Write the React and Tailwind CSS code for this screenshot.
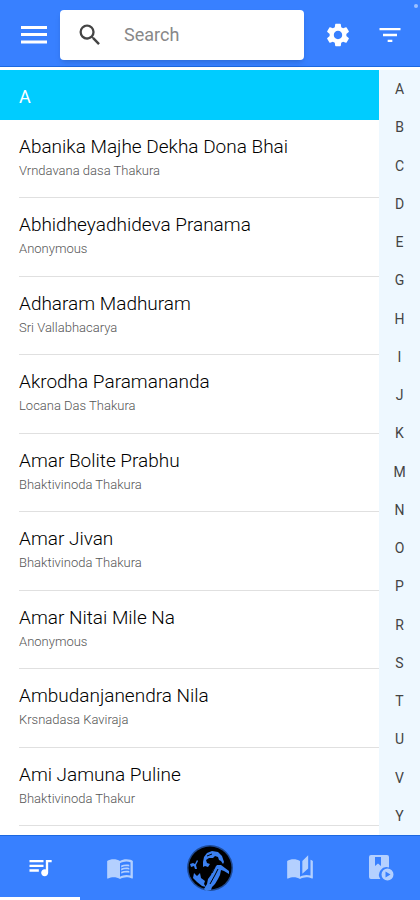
import { useState } from "react";
import { MdSettings, MdFilterList, MdSearch, MdQueueMusic, MdMenuBook, MdAutoStories } from "react-icons/md";

const songs = [
  { title: "Abanika Majhe Dekha Dona Bhai", author: "Vrndavana dasa Thakura" },
  { title: "Abhidheyadhideva Pranama", author: "Anonymous" },
  { title: "Adharam Madhuram", author: "Sri Vallabhacarya" },
  { title: "Akrodha Paramananda", author: "Locana Das Thakura" },
  { title: "Amar Bolite Prabhu", author: "Bhaktivinoda Thakura" },
  { title: "Amar Jivan", author: "Bhaktivinoda Thakura" },
  { title: "Amar Nitai Mile Na", author: "Anonymous" },
  { title: "Ambudanjanendra Nila", author: "Krsnadasa Kaviraja" },
  { title: "Ami Jamuna Puline", author: "Bhaktivinoda Thakur" },
];

const letters = "ABCDEGHIJKMNOPRSTUVY".split("");

function MenuIcon() {
  return (
    <svg viewBox="0 0 28 20" className="w-7 h-5" fill="currentColor">
      <path d="M1 1h26v3H1zM1 8h26v3H1zM1 15.500h26v3H1z" />
    </svg>
  );
}

function BookPlayIcon() {
  return (
    <svg viewBox="-3 0 28 26" className="w-7 h-7" fill="currentColor">
      <path fillRule="evenodd" d="M2 0h16a2 2 0 0 1 2 2v10.600a7.500 7.500 0 0 0-8.600 11.400H2a2 2 0 0 1-2-2V2a2 2 0 0 1 2-2zm4 2v9l3-2.400 3 2.400V2z" />
      <path fillRule="evenodd" d="M18.500 13.500a6 6 0 1 1 0 12 6 6 0 0 1 0-12zm-2 3v6l5-3z" />
    </svg>
  );
}

function Portrait() {
  return (
    <svg viewBox="0 0 48 48" className="w-12 h-12">
      <circle cx="24" cy="24" r="23" fill="#1f4a94" />
      <circle cx="24" cy="24" r="21.500" fill="#000" />
      <g fill="#3b80f0">
        {/* hair and face */}
        <path d="M17 18l1-5 3-4 5-2 6 1 4 4 2 6-1 2-2-3-2-1-1-3-3-1-2 2-4 0-3 2 1 3 3 1-2 3-3-1-2 1z" />
        {/* shoulder and arm */}
        <path d="M31 21l4 0 4 3 4 3 0 3-5-3-3-1-1 5-2 4-3 5-3 3-1 3-5 1-2-2 3-5 1-5 3-4 2-5z" />
        {/* flower, hand and raised cloth */}
        <path d="M4 20l3-1 2 1 2-4 1 1-2 4 1 4-2 0-1-3-3 1zM8 29l3 3 3-3 1 5 4 3-1 3 2 3-4-1-5-4-4-4z" />
      </g>
      <path d="M32 25l-3 6-5 9M29 23l-3 6M21 12l5-2" stroke="#000" fill="none" />
    </svg>
  );
}

export default function App() {
  const [query, setQuery] = useState("");

  return (
    <div className="relative min-h-screen flex flex-col bg-white font-[Roboto,sans-serif]">
      <span className="absolute top-1 right-0.5 size-1 rounded-sm bg-[#9cc0ff]" />
      <header className="h-[67px] flex items-center pt-1 pl-5 pr-4 bg-[#3880ff] border-b border-[#1c68e0] text-white">
        <button aria-label="Menu" className="shrink-0"><MenuIcon /></button>
        <label className="flex-1 min-w-0 h-[50px] ml-3 flex items-center bg-white rounded-sm shadow-md">
          <MdSearch className="ml-4 size-7 shrink-0 text-[#444]" />
          <input
            type="text"
            aria-label="Search"
            placeholder="Search"
            value={query}
            onChange={(e) => setQuery(e.target.value)}
            className="w-full min-w-0 ml-5 text-lg text-gray-800 placeholder:text-[#888] outline-none"
          />
        </label>
        <button aria-label="Settings" className="ml-5 shrink-0"><MdSettings className="size-7" /></button>
        <button aria-label="Filter" className="ml-6 shrink-0"><MdFilterList className="size-7" /></button>
      </header>

      <main className="flex-1 flex mt-[3px]">
        <section className="flex-1 min-w-0 flex flex-col pb-[9px]">
          <h2 className="h-[50px] pt-1 pl-[19px] flex items-center bg-[#00ccff] text-white text-lg">A</h2>
          <ul className="flex-1 flex flex-col pl-[19px]">
            {songs.map((song) => (
              <li key={song.title} className="flex-1 pt-[15px] border-b border-[#e0e0e0]">
                <h3 className="text-[19px] leading-6 font-light text-black">{song.title}</h3>
                <p className="mt-1 text-[13px] leading-4 font-light text-[#555]">{song.author}</p>
              </li>
            ))}
          </ul>
        </section>
        <nav aria-label="Index" className="w-[41px] flex flex-col bg-[#eef8ff] text-sm text-[#444]">
          {letters.map((l) => (
            <a key={l} href={"#" + l} className="flex-1 flex items-center justify-center">{l}</a>
          ))}
        </nav>
      </main>

      <footer className="h-[65px] flex bg-[#3880ff] border-t border-[#1c68e0] text-[#b4d0ff]">
        <button aria-label="Songs" className="flex-4 flex items-center justify-center border-b-3 border-white text-white">
          <MdQueueMusic className="size-7" />
        </button>
        <button aria-label="Books" className="flex-4 flex items-center justify-center"><MdMenuBook className="size-7" /></button>
        <button aria-label="Home" className="flex-5 flex items-center justify-center"><Portrait /></button>
        <button aria-label="Stories" className="flex-4 flex items-center justify-center"><MdAutoStories className="size-7" /></button>
        <button aria-label="Audio books" className="flex-4 flex items-center justify-center"><BookPlayIcon /></button>
      </footer>
    </div>
  );
}
